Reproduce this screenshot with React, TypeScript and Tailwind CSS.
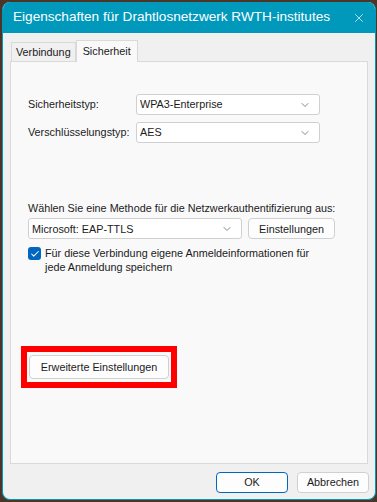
import { X, ChevronDown, Check } from "lucide-react";

function Select({ value, className }: { value: string; className: string }) {
  return (
    <div
      className={`flex h-[21px] items-center justify-between rounded-[3px] border border-[#d0d0d0] bg-white pl-[3px] pr-[8px] ${className}`}
    >
      <span className="whitespace-nowrap text-[#1b1b1b]">{value}</span>
      <ChevronDown className="h-[12px] w-[12px] text-[#5f5f5f]" strokeWidth={1.5} />
    </div>
  );
}

function Button({ label, className, primary }: { label: string; className: string; primary?: boolean }) {
  return (
    <div
      className={`flex h-[21px] items-center justify-center whitespace-nowrap rounded-[4px] border bg-[#fdfdfd] text-[#1b1b1b] ${
        primary ? "border-[#0067c0]" : "border-[#d0d0d0]"
      } ${className}`}
    >
      {label}
    </div>
  );
}

export default function App() {
  return (
    <div
      className="h-[502px] w-[377px] bg-[#4a3526] pl-[2px] pt-[2px] text-[10.8px]"
      style={{ fontFamily: '"Liberation Sans", Arial, sans-serif' }}
    >
      <div className="flex h-[498px] w-[374px] flex-col overflow-hidden rounded-[8px] border border-t-0 border-[#0099bc] bg-[#f0f0f0]">
        {/* title bar */}
        <div className="flex h-[31px] shrink-0 items-center justify-between bg-[#0099bc] pl-[10px] pr-[9px]">
          <span className="whitespace-nowrap text-[13.6px] text-white">
            Eigenschaften für Drahtlosnetzwerk RWTH-institutes
          </span>
          <X className="h-[14px] w-[14px] text-white" strokeWidth={1.2} />
        </div>

        {/* tabs */}
        <div className="flex h-[28px] items-end pl-[8px] pt-[7px]">
          <div className="flex h-[19px] items-center border border-b-0 border-[#d9d9d9] bg-[#f0f0f0] px-[4px] text-[#1b1b1b]">
            Verbindung
          </div>
          <div className="relative -mb-px flex h-[22px] items-center border border-b-0 border-[#d9d9d9] bg-[#f9f9f9] px-[6px] text-[#1b1b1b]">
            Sicherheit
          </div>
        </div>

        {/* panel */}
        <div className="mx-[7px] flex h-[403px] flex-col border border-[#d9d9d9] bg-[#f9f9f9] pl-[17px] text-[#1b1b1b]">
          <div className="mt-[32px] flex items-center">
            <span className="w-[108px] whitespace-nowrap">Sicherheitstyp:</span>
            <Select value="WPA3-Enterprise" className="w-[184px]" />
          </div>
          <div className="mt-[7px] flex items-center">
            <span className="w-[108px] whitespace-nowrap">Verschlüsselungstyp:</span>
            <Select value="AES" className="w-[184px]" />
          </div>

          <div className="mt-[57px] whitespace-nowrap">
            Wählen Sie eine Methode für die Netzwerkauthentifizierung aus:
          </div>
          <div className="mt-[2px] flex items-center gap-[6px]">
            <Select value="Microsoft: EAP-TTLS" className="w-[214px]" />
            <Button label="Einstellungen" className="w-[87px]" />
          </div>
          <div className="mt-[7px] flex items-start gap-[4px]">
            <div className="mt-[1px] flex h-[13px] w-[13px] shrink-0 items-center justify-center rounded-[3px] bg-[#0067c0]">
              <Check className="h-[10px] w-[10px] text-white" strokeWidth={2.5} />
            </div>
            <div className="whitespace-nowrap leading-[14px]">
              Für diese Verbindung eigene Anmeldeinformationen für
              <br />
              jede Anmeldung speichern
            </div>
          </div>

          <div className="mt-[72px] ml-[-7px] w-[156px] border-[6px] border-[#ff0000] bg-[#f9f9f9] px-[2px] py-[3px]">
            <Button label="Erweiterte Einstellungen" className="h-[24px] w-full" />
          </div>
        </div>

        {/* footer */}
        <div className="mt-[8px] flex justify-end gap-[9px] pr-[6px]">
          <Button label="OK" className="w-[72px]" primary />
          <Button label="Abbrechen" className="w-[72px]" />
        </div>
      </div>
    </div>
  );
}
